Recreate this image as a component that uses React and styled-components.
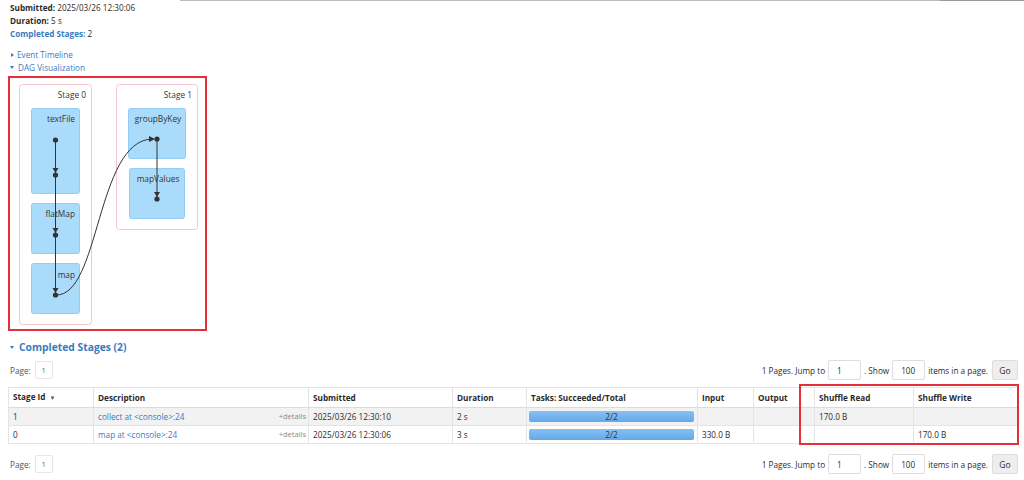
import React from 'react';
import styled, { createGlobalStyle } from 'styled-components';

const GlobalStyle=createGlobalStyle`
	body{
		margin: 0;
		background: #fff;
		font-family: "Open Sans", "Noto Sans", sans-serif;
		font-size: 8.2px;
		color: #2b2b2b;
	}
`;

const Page=styled.div`
	width: 1024px;
	height: 480px;
	overflow: hidden;
	display: flex;
	flex-direction: column;
`;

const TopRule=styled.div`
	height: 1px;
	margin-left: 180px;
	background: linear-gradient(to right, #bbb 0, #bbb 90%, #999 90%, #999 100%);
`;

const Summary=styled.ul`
	list-style: none;
	margin: 0;
	padding: 0 0 0 10px;
	display: flex;
	flex-direction: column;
	line-height: 13px;
	& strong{
		font-weight: 700;
	}
`;

const BlueStrong=styled.strong`
	color: #3a7bbf;
`;

const Toggles=styled.div`
	margin-top: 9px;
	padding-left: 10px;
	display: flex;
	flex-direction: column;
	line-height: 12.5px;
`;

const Toggle=styled.span`
	color: #3a7bbf;
	display: flex;
	align-items: center;
	gap: 4px;
`;

const Arrow=styled.span`
	width: 0;
	height: 0;
	border-style: solid;
	${p=>p.open
		? `border-width: 3px 2.5px 0 2.5px; border-color: #3a7bbf transparent transparent transparent;`
		: `border-width: 2.5px 0 2.5px 3px; border-color: transparent transparent transparent #3a7bbf; margin-left: 1px; margin-right: -1px;`}
`;

const DagBox=styled.div`
	margin: 2px 0 0 8px;
	width: 195px;
	height: 251px;
	border: 2px solid #e5303a;
	& svg{
		display: block;
		font-family: "Open Sans", "Noto Sans", sans-serif;
		font-size: 8.3px;
	}
`;

const Heading=styled.h4`
	margin: 9px 0 0 10px;
	font-size: 10.3px;
	font-weight: 700;
	color: #3a7bbf;
	display: flex;
	align-items: center;
	gap: 5px;
	line-height: 14px;
`;

const PagerRow=styled.div`
	display: flex;
	align-items: center;
	justify-content: space-between;
	padding: 0 6px 0 10px;
	margin-top: ${p=>p.top}px;
	height: 20px;
`;

const PageLabel=styled.div`
	display: flex;
	align-items: center;
	gap: 4px;
	color: #555;
`;

const PageBox=styled.span`
	width: 16px;
	height: 16px;
	border: 1px solid #e6e6e6;
	border-radius: 2px;
	display: flex;
	align-items: center;
	justify-content: center;
	font-size: 7.5px;
	color: #666;
`;

const Jump=styled.div`
	display: flex;
	align-items: center;
	gap: 3px;
`;

const Field=styled.span`
	width: 33px;
	height: 20px;
	box-sizing: border-box;
	border: 1px solid #ddd;
	border-radius: 2px;
	display: flex;
	align-items: center;
	padding-left: 8px;
`;

const GoButton=styled.span`
	width: 26px;
	height: 20px;
	box-sizing: border-box;
	background: #eee;
	border: 1px solid #ddd;
	border-radius: 2px;
	display: flex;
	align-items: center;
	justify-content: center;
	margin-left: 1px;
	font-size: 8.5px;
`;

const TableWrap=styled.div`
	position: relative;
	margin: 7px 0 0 8px;
	width: 1009px;
`;

const Table=styled.table`
	border-collapse: collapse;
	table-layout: fixed;
	width: 1009px;
	& th, & td{
		height: 17px;
		padding: 0 4px;
		border: 1px solid #e4e4e4;
		text-align: left;
		white-space: nowrap;
		line-height: 17px;
		box-sizing: border-box;
	}
	& th{
		font-weight: 700;
		border-bottom-color: #dcdcdc;
	}
	& tbody tr:nth-child(odd) td{
		background: #f2f2f2;
	}
`;

const SortMark=styled.span`
	font-size: 6px;
	margin-left: 4px;
	color: #555;
`;

const DescCell=styled.div`
	display: flex;
	justify-content: space-between;
	align-items: center;
	margin-right: -2px;
	& a{
		color: #3a7bbf;
		text-decoration: none;
	}
`;

const Details=styled.span`
	font-size: 7.5px;
	color: #8a8a8a;
`;

const Progress=styled.div`
	height: 11px;
	border-radius: 2px;
	background: linear-gradient(to bottom, #86c0f2, #62a9ea);
	display: flex;
	align-items: center;
	justify-content: center;
	color: #333;
	margin-left: -2px;
	margin-right: -1px;
`;

const Highlight=styled.div`
	position: absolute;
	left: 791px;
	top: -3px;
	width: 216px;
	height: 57px;
	border: 2px solid #e5303a;
	pointer-events: none;
`;

const columns=[85, 215, 144, 74, 171, 56, 61, 99, 104];

const stages=[
	{ id: 1, desc: 'collect at <console>:24', submitted: '2025/03/26 12:30:10', duration: '2 s', tasks: '2/2', input: '', output: '', read: '170.0 B', write: '' },
	{ id: 0, desc: 'map at <console>:24', submitted: '2025/03/26 12:30:06', duration: '3 s', tasks: '2/2', input: '330.0 B', output: '', read: '', write: '170.0 B' },
];

const Pager=({ top })=>(
	<PagerRow top={top}>
		<PageLabel>Page: <PageBox>1</PageBox></PageLabel>
		<Jump>
			1 Pages. Jump to <Field>1</Field> . Show <Field>100</Field> items in a page. <GoButton>Go</GoButton>
		</Jump>
	</PagerRow>
);

const Head=({ x, y })=>(
	<path d={`M${x-3},${y-5} L${x+3},${y-5} L${x},${y} Z`} fill="#333"/>
);

const Dag=()=>(
	<svg width="195" height="251" viewBox="10 77 195 251">
		<rect x="19.5" y="83.5" width="72" height="240" rx="3" fill="#fff" stroke="#f6c5cb"/>
		<rect x="116.5" y="83.5" width="81" height="145" rx="3" fill="#fff" stroke="#f6c5cb"/>
		<text x="86" y="97" textAnchor="end" fill="#333">Stage 0</text>
		<text x="192" y="97" textAnchor="end" fill="#333">Stage 1</text>

		<rect x="31.5" y="107.5" width="48" height="85" rx="2" fill="#abdbfb" stroke="#93cdf5"/>
		<rect x="31.5" y="202.5" width="48" height="50" rx="2" fill="#abdbfb" stroke="#93cdf5"/>
		<rect x="31.5" y="262.5" width="48" height="50" rx="2" fill="#abdbfb" stroke="#93cdf5"/>
		<rect x="128.5" y="107.5" width="57" height="50" rx="2" fill="#abdbfb" stroke="#93cdf5"/>
		<rect x="129.5" y="167.5" width="55" height="50" rx="2" fill="#abdbfb" stroke="#93cdf5"/>

		<text x="75" y="121" textAnchor="end" fill="#333">textFile</text>
		<text x="75" y="216" textAnchor="end" fill="#333">flatMap</text>
		<text x="75" y="277" textAnchor="end" fill="#333">map</text>
		<text x="158" y="121" textAnchor="middle" fill="#333">groupByKey</text>
		<text x="158" y="181" textAnchor="middle" fill="#333">mapValues</text>

		<line x1="55.5" y1="139" x2="55.5" y2="294" stroke="#333" strokeWidth="1"/>
		<line x1="157" y1="138" x2="157" y2="198" stroke="#333" strokeWidth="1"/>
		<path d="M55.5,294 C100,296 96,140 152,138" fill="none" stroke="#333" strokeWidth="1"/>

		<Head x={55.5} y={172}/>
		<Head x={55.5} y={232}/>
		<Head x={55.5} y={292}/>
		<Head x={157} y={196}/>
		<path d="M149,135 L149,141 L155,138 Z" fill="#333"/>

		{[[55.5, 139], [55.5, 174], [55.5, 234], [55.5, 294], [157, 138], [157, 198]].map(([cx, cy])=>(
			<circle key={`${cx}-${cy}`} cx={cx} cy={cy} r="2.6" fill="#333"/>
		))}
	</svg>
);

export default function App(){
	return (
		<Page>
			<GlobalStyle/>
			<TopRule/>
			<Summary>
				<li><strong>Submitted:</strong> 2025/03/26 12:30:06</li>
				<li><strong>Duration:</strong> 5 s</li>
				<li><BlueStrong>Completed Stages:</BlueStrong> 2</li>
			</Summary>
			<Toggles>
				<Toggle><Arrow/>Event Timeline</Toggle>
				<Toggle><Arrow open/>DAG Visualization</Toggle>
			</Toggles>
			<DagBox>
				<Dag/>
			</DagBox>
			<Heading><Arrow open/>Completed Stages (2)</Heading>
			<Pager top={6}/>
			<TableWrap>
				<Table>
					<colgroup>
						{columns.map((w, i)=><col key={i} style={{ width: w }}/>)}
					</colgroup>
					<thead>
						<tr>
							<th>Stage Id<SortMark>▼</SortMark></th>
							<th>Description</th>
							<th>Submitted</th>
							<th>Duration</th>
							<th>Tasks: Succeeded/Total</th>
							<th>Input</th>
							<th>Output</th>
							<th>Shuffle Read</th>
							<th>Shuffle Write</th>
						</tr>
					</thead>
					<tbody>
						{stages.map(s=>(
							<tr key={s.id}>
								<td>{s.id}</td>
								<td>
									<DescCell>
										<a href="#">{s.desc}</a>
										<Details>+details</Details>
									</DescCell>
								</td>
								<td>{s.submitted}</td>
								<td>{s.duration}</td>
								<td><Progress>{s.tasks}</Progress></td>
								<td>{s.input}</td>
								<td>{s.output}</td>
								<td>{s.read}</td>
								<td>{s.write}</td>
							</tr>
						))}
					</tbody>
				</Table>
				<Highlight/>
			</TableWrap>
			<Pager top={10}/>
		</Page>
	);
}
